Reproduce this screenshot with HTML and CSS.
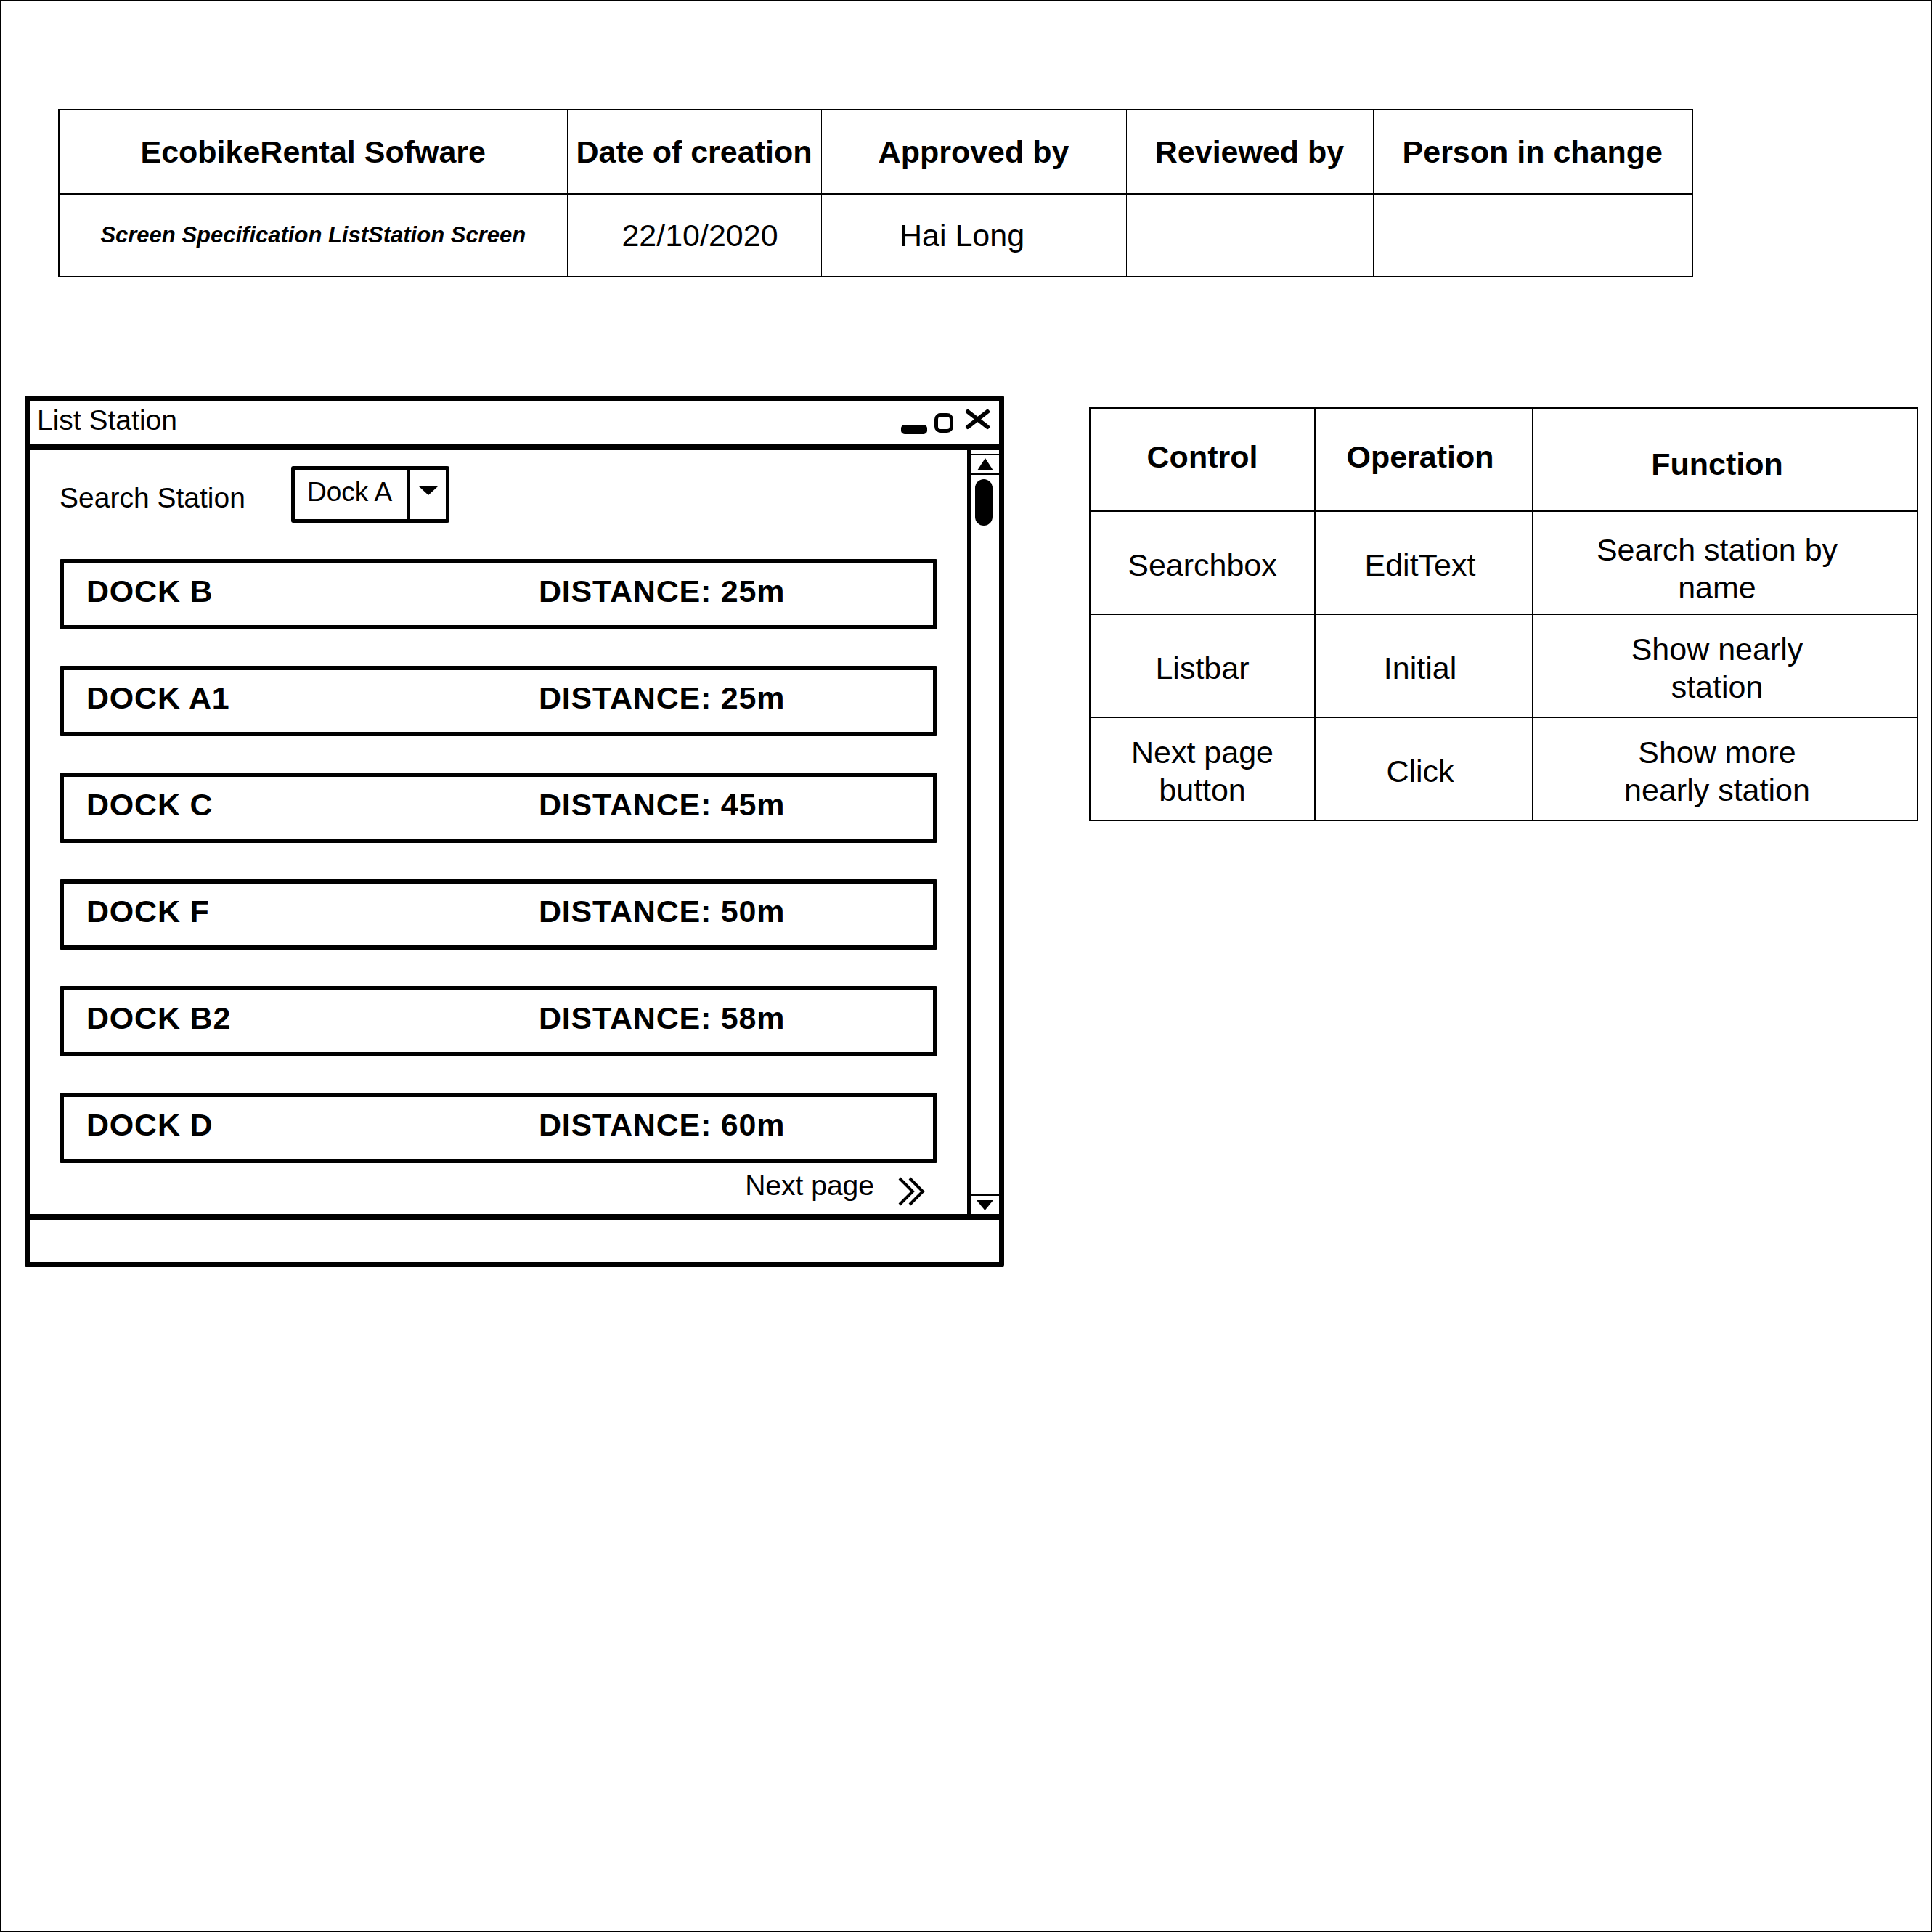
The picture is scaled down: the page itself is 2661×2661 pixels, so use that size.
FILE: index.html
```html
<!DOCTYPE html>
<html lang="en">
<head>
    <meta charset="UTF-8">
    <title>Screen Specification - ListStation Screen</title>
    <link rel="stylesheet" href="styles.css">
</head>
<body>
<div class="page">
    <table class="doc-head">
        <colgroup>
            <col style="width: 700px">
            <col style="width: 350px">
            <col style="width: 420px">
            <col style="width: 340px">
            <col style="width: 440px">
        </colgroup>
        <tr>
            <th>EcobikeRental Sofware</th>
            <th>Date of creation</th>
            <th>Approved by</th>
            <th>Reviewed by</th>
            <th>Person in change</th>
        </tr>
        <tr>
            <td class="doc-title">Screen Specification ListStation Screen</td>
            <td class="created">22/10/2020</td>
            <td class="approver">Hai Long</td>
            <td></td>
            <td></td>
        </tr>
    </table>

    <div class="spec">
        <!-- wireframe of the list station window -->
        <div class="window">
            <div class="win-title">
                <span class="win-name">List Station</span>
                <svg class="win-controls" width="124" height="36" viewBox="0 0 124 36">
                    <rect x="0" y="21" width="36" height="13" rx="5" fill="#000"/>
                    <rect x="48.5" y="7.5" width="21" height="22" rx="6" fill="none" stroke="#000" stroke-width="5"/>
                    <path d="M92 3 L119 24 M119 3 L92 24" stroke="#000" stroke-width="6" stroke-linecap="round"/>
                </svg>
            </div>
            <div class="win-body">
                <div class="win-main">
                    <div class="search-row">
                        <div class="search-label">Search Station</div>
                        <div class="dropdown">
                            <div class="dropdown-value">Dock A</div>
                            <div class="dropdown-btn">
                                <svg width="26" height="12" viewBox="0 0 26 12"><path d="M0 0 H26 L13 12 Z" fill="#000"/></svg>
                            </div>
                        </div>
                    </div>
                    <div class="station-list">
                        <div class="station"><span>DOCK B</span><span>DISTANCE: 25m</span></div>
                        <div class="station"><span>DOCK A1</span><span>DISTANCE: 25m</span></div>
                        <div class="station"><span>DOCK C</span><span>DISTANCE: 45m</span></div>
                        <div class="station"><span>DOCK F</span><span>DISTANCE: 50m</span></div>
                        <div class="station"><span>DOCK B2</span><span>DISTANCE: 58m</span></div>
                        <div class="station"><span>DOCK D</span><span>DISTANCE: 60m</span></div>
                    </div>
                    <div class="next-page">
                        <span>Next page</span>
                        <svg width="40" height="40" viewBox="0 0 40 40" fill="none" stroke="#000" stroke-width="4">
                            <path d="M4 2 L22 20 L4 38"/>
                            <path d="M18 2 L36 20 L18 38"/>
                        </svg>
                    </div>
                </div>
                <div class="scrollbar">
                    <div class="scroll-btn up">
                        <svg width="22" height="17" viewBox="0 0 22 17"><path d="M11 0 L22 17 H0 Z" fill="#000"/></svg>
                    </div>
                    <div class="scroll-track">
                        <div class="scroll-thumb"></div>
                    </div>
                    <div class="scroll-btn down">
                        <svg width="23" height="14" viewBox="0 0 23 14"><path d="M0 0 H23 L11.5 14 Z" fill="#000"/></svg>
                    </div>
                </div>
            </div>
            <div class="win-status"></div>
        </div>

        <table class="controls">
            <colgroup>
                <col style="width: 310px">
                <col style="width: 300px">
                <col style="width: 530px">
            </colgroup>
            <tr>
                <th class="raised">Control</th>
                <th class="op raised">Operation</th>
                <th class="func lowered">Function</th>
            </tr>
            <tr>
                <td>Searchbox</td>
                <td class="op">EditText</td>
                <td class="func low">Search station by<br>name</td>
            </tr>
            <tr>
                <td>Listbar</td>
                <td class="op">Initial</td>
                <td class="func">Show nearly<br>station</td>
            </tr>
            <tr>
                <td>Next page<br>button</td>
                <td class="op">Click</td>
                <td class="func">Show more<br>nearly station</td>
            </tr>
        </table>
    </div>
</div>
</body>
</html>
```

FILE: styles.css
```css
* {
    box-sizing: border-box;
}

body {
    margin: 0;
    background: #fff;
    color: #000;
    font-family: "Liberation Sans", Arial, sans-serif;
}

.page {
    width: 2661px;
    height: 2661px;
    border: 2px solid #000;
    overflow: hidden;
}

/* document header table */
.doc-head {
    margin: 148px 0 0 78px;
    width: 2250px;
    table-layout: fixed;
    border-collapse: collapse;
    border: 2px solid #000;
}

.doc-head th,
.doc-head td {
    border: 1px solid #000;
    padding: 0;
    text-align: center;
    vertical-align: middle;
    font-size: 43px;
    white-space: nowrap;
}

.doc-head th {
    height: 116px;
    border-bottom: 2px solid #000;
    font-weight: bold;
}

.doc-head td {
    height: 114px;
}

.doc-head .doc-title {
    font-size: 31px;
    font-weight: bold;
    font-style: italic;
}

.doc-head .created {
    padding-left: 16px;
}

.doc-head .approver {
    padding-right: 32px;
}

.spec {
    display: flex;
    align-items: flex-start;
    margin: 163px 0 0 32px;
}

/* sketched window */
.window {
    width: 1349px;
    height: 1200px;
    flex: none;
    display: flex;
    flex-direction: column;
    border: 7px solid #000;
    border-radius: 2px;
}

.win-title {
    height: 68px;
    flex: none;
    display: flex;
    align-items: center;
    justify-content: space-between;
    padding: 0 11px 0 10px;
    border-bottom: 8px solid #000;
    font-size: 39px;
}

.win-name {
    margin-top: -6px;
}

.win-body {
    flex: 1;
    display: flex;
    min-height: 0;
}

.win-status {
    height: 66px;
    flex: none;
    border-top: 8px solid #000;
}

.win-main {
    flex: 1;
    padding: 22px 41px 0 41px;
}

.search-row {
    display: flex;
    align-items: center;
}

.search-label {
    width: 319px;
    padding-top: 9px;
    font-size: 39px;
}

.dropdown {
    display: flex;
    width: 218px;
    height: 78px;
    border: 5px solid #000;
    border-radius: 3px;
}

.dropdown-value {
    flex: 1;
    display: flex;
    align-items: center;
    padding: 0 0 6px 17px;
    font-size: 37px;
}

.dropdown-btn {
    width: 54px;
    display: flex;
    align-items: center;
    justify-content: center;
    padding-bottom: 10px;
    border-left: 5px solid #000;
}

.station-list {
    display: flex;
    flex-direction: column;
    gap: 50px;
    margin-top: 50px;
}

.station {
    height: 97px;
    display: grid;
    grid-template-columns: 623px 1fr;
    align-items: center;
    padding: 0 0 9px 31px;
    border: 6px solid #000;
    border-radius: 2px;
    font-size: 43px;
    font-weight: bold;
    letter-spacing: 0.8px;
}

.next-page {
    display: flex;
    justify-content: flex-end;
    align-items: flex-start;
    gap: 31px;
    margin-top: 11px;
    padding-right: 16px;
    font-size: 39px;
    line-height: 39px;
}

.next-page span {
    margin-top: 0;
}

.next-page svg {
    margin-top: 8px;
}

.scrollbar {
    width: 44px;
    flex: none;
    display: flex;
    flex-direction: column;
    padding-top: 5px;
    border-left: 5px solid #000;
}

.scroll-btn {
    display: flex;
    align-items: center;
    justify-content: center;
}

.scroll-btn.up {
    height: 29px;
    border-top: 2px solid #000;
    border-bottom: 3px solid #000;
}

.scroll-btn.down {
    height: 28px;
    border-top: 3px solid #000;
}

.scroll-track {
    flex: 1;
    padding: 6px 0 0 6px;
}

.scroll-thumb {
    width: 24px;
    height: 64px;
    background: #000;
    border-radius: 12px;
}

/* control description table */
.controls {
    margin: 16px 0 0 117px;
    width: 1140px;
    table-layout: fixed;
    border-collapse: collapse;
}

.controls th,
.controls td {
    height: 142px;
    padding: 0;
    border: 2px solid #000;
    text-align: center;
    vertical-align: middle;
    font-size: 43px;
    line-height: 1.2;
}

.controls td {
    padding-top: 8px;
}

.controls th {
    font-weight: bold;
}

.controls .op {
    padding-right: 10px;
}

.controls .func {
    padding-right: 22px;
}

.controls .low {
    padding-top: 18px;
}

.controls .raised {
    padding-bottom: 6px;
}

.controls .lowered {
    padding-top: 14px;
}
```
